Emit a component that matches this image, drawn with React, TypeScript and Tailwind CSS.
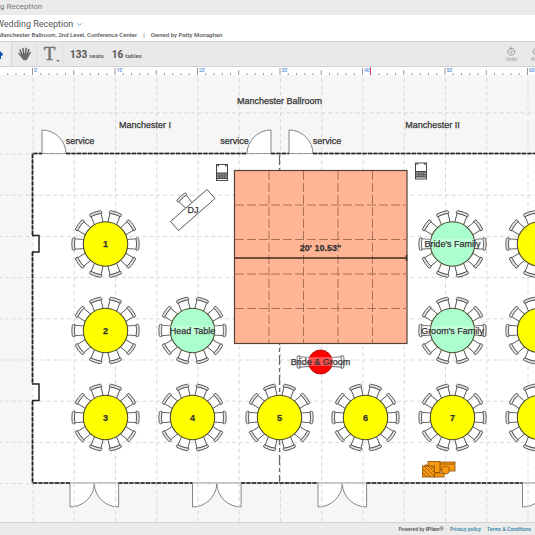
import React, { useEffect, useState } from "react";
import { ChevronDown } from "lucide-react";

const INK = "#555";
const STEP = 41.25;
const ORIGIN_X = 32.5;

type TableSpec = { x: number; y: number; label: string; fill: string };

const YELLOW = "#ffff00";
const MINT = "#aaffcc";

const tables: TableSpec[] = [
  { x: 105.5, y: 244, label: "1", fill: YELLOW },
  { x: 105.5, y: 330.5, label: "2", fill: YELLOW },
  { x: 105.5, y: 417.5, label: "3", fill: YELLOW },
  { x: 192.5, y: 330.5, label: "Head Table", fill: MINT },
  { x: 192.5, y: 417.5, label: "4", fill: YELLOW },
  { x: 279.5, y: 417.5, label: "5", fill: YELLOW },
  { x: 365.5, y: 417.5, label: "6", fill: YELLOW },
  { x: 452.5, y: 244, label: "Bride's Family", fill: MINT },
  { x: 452.5, y: 330.5, label: "Groom's Family", fill: MINT },
  { x: 452.5, y: 417.5, label: "7", fill: YELLOW },
  { x: 539.5, y: 244, label: "10", fill: YELLOW },
  { x: 539.5, y: 330.5, label: "9", fill: YELLOW },
  { x: 539.5, y: 417.5, label: "8", fill: YELLOW },
];

function Chair() {
  return (
    <g fill="#fff" stroke={INK} strokeWidth="0.9">
      <path d="M20 -4.4 L31 -5.2 V5.2 L20 4.4 Z" />
      <path d="M30.5 -6 Q32 -6.8 33.2 -5.6 Q34.2 0 33.2 5.6 Q32 6.8 30.5 6 Q31.6 0 30.5 -6 Z" fill="#e4e4e4" />
    </g>
  );
}

function Label({ x, y, text, bold }: { x: number; y: number; text: string; bold?: boolean }) {
  return (
    <text
      x={x}
      y={y}
      textAnchor="middle"
      stroke="#333"
      strokeWidth="0.25"
      className={bold ? "fill-[#333] text-[9px] font-bold" : "fill-[#333] text-[9px]"}
    >
      {text}
    </text>
  );
}

function RoundTable({ x, y, label, fill }: TableSpec) {
  const named = label.length > 2;
  return (
    <g>
      <g transform={`translate(${x} ${y})`}>
        {Array.from({ length: 10 }, (_, i) => (
          <g key={i} transform={`rotate(${i * 36})`}>
            <Chair />
          </g>
        ))}
        <circle r="22.2" fill={fill} stroke="#4c4c30" strokeWidth="1.1" />
        {named && <rect x="-31" y="-5" width="62" height="9" fill="#fff" opacity="0.25" />}
      </g>
      <Label x={x} y={y + 3} text={label} bold={!named} />
    </g>
  );
}

function ServiceDoor({ x, flip }: { x: number; flip?: boolean }) {
  return (
    <path
      d="M0 0 V-23.5 A24 24 0 0 1 24 0 Z"
      transform={`translate(${x} 153.5) scale(${flip ? -1 : 1} 1)`}
      fill="#fff"
      stroke="#858585"
    />
  );
}

function DoubleDoor({ x }: { x: number }) {
  return (
    <path
      d="M0 0 V24 A24.3 24 0 0 0 24.3 1 A24.3 24 0 0 0 48.6 24 V0 Z"
      transform={`translate(${x} 483)`}
      fill="#fff"
      stroke="#858585"
    />
  );
}

function Speaker({ x, y }: { x: number; y: number }) {
  return (
    <g transform={`translate(${x} ${y})`} stroke="#444">
      <rect width="11" height="16" fill="#fff" />
      <path d="M0 8.500 H11 V14 H0 Z" fill="#888" />
      <path d="M1 11.500 H10 M3 9 V14 M5.500 9 V14 M8 9 V14" strokeWidth="0.5" />
      <path d="M1 1 H2.500 M8.500 1 H10" strokeWidth="1.5" />
    </g>
  );
}

function GiftTable() {
  return (
    <g transform="translate(422 461)" fill="#f79a12" stroke="#8a4d05" strokeWidth="0.8">
      <rect x="18" y="1" width="15" height="9" />
      <path d="M19 3 H33" />
      <rect x="3" y="4" width="14" height="9" />
      <rect x="12" y="12" width="10" height="4" />
      <rect x="6" y="0.5" width="12" height="11" />
      <rect x="0.5" y="5" width="12" height="11" />
      <path d="M1 8 L8.500 16 M1 12 L5 16 M2 5 L12 15 M6 5 L12 11 M9 5 L12 8" />
      <circle cx="23.500" cy="9" r="4" />
    </g>
  );
}

function DanceFloor() {
  return (
    <g>
      <rect x="234.500" y="170.500" width="172.500" height="173" fill="#ffb593" stroke="#554138" strokeWidth="1.2" />
      <path
        d="M269 171 V343 M303.500 171 V343 M338 171 V343 M372.500 171 V343 M235 205 H407 M235 239.500 H407 M235 274 H407 M235 308.500 H407"
        stroke="#a97157"
        strokeDasharray="9 3"
        fill="none"
      />
      <path d="M234.500 258 H407 M406.500 255 V261" stroke="#3d2a20" strokeWidth="1.5" />
      <Label x={320.5} y={251} text={"20' 10.53\""} bold />
    </g>
  );
}

const WALLS =
  "M32.500 235 V153.500 H42 M66 153.500 H247 M271 153.500 H289 M313 153.500 H2000 M32.500 252 V384 M32.500 401 V483 H70 M118.500 483 H192.500 M241 483 H318 M366.500 483 H522.500";

function FloorPlan() {
  return (
    <svg
      role="img"
      aria-label="Manchester Ballroom floor plan"
      className="block min-h-[447px] w-full flex-1 bg-[#f6f6f6] font-['Liberation_Sans',Arial,sans-serif]"
    >
      <defs>
        <pattern id="grid" x="32.5" y="153.5" width={STEP} height="41.2" patternUnits="userSpaceOnUse">
          <path d={`M0.5 0 V41.2 M0 0.5 H${STEP}`} stroke="#d8d8d8" strokeDasharray="4 2.9" fill="none" />
        </pattern>
      </defs>
      <g transform="translate(0 -75)">
        <rect x="32.500" y="153.500" width="2000" height="329.500" fill="#fff" />
        <ServiceDoor x={42} />
        <ServiceDoor x={271} flip />
        <ServiceDoor x={289} />
        <DoubleDoor x={70} />
        <DoubleDoor x={192.5} />
        <DoubleDoor x={318} />
        <DoubleDoor x={522.5} />
        <rect y="75" width="2000" height="2000" fill="url(#grid)" />
        <g fill="none" strokeWidth="1.6">
          <path d={WALLS} stroke="#909090" />
          <path d={WALLS} stroke="#222" strokeDasharray="4 1.5" />
          <path d="M32 235.500 H39 V252 H32 M32 384 H39 V400.500 H32" stroke="#222" strokeWidth="1.5" />
        </g>
        <path d="M279.500 155 V482" stroke="#666" strokeWidth="1.2" strokeDasharray="10 3 4 3" />

        <Label x={279.5} y={104} text="Manchester Ballroom" />
        <Label x={145} y={128} text="Manchester I" />
        <Label x={432.5} y={128} text="Manchester II" />
        <Label x={80} y={144} text="service" />
        <Label x={234.5} y={144} text="service" />
        <Label x={327} y={144} text="service" />

        <Speaker x={216.5} y={164.5} />
        <Speaker x={415.5} y={163} />

        <g transform="translate(202 220) rotate(-132) scale(0.95)">
          <Chair />
        </g>
        <path d="M207 189.500 L215 198.500 L178.500 230.500 L170.500 221.500 Z" fill="#fff" stroke={INK} />
        <Label x={193} y={213} text="DJ" />

        <DanceFloor />
        {tables.map((t) => (
          <RoundTable key={t.label} {...t} />
        ))}

        <g transform="translate(320.5 362)">
          <g transform="translate(-10 0)"><Chair /></g>
          <g transform="translate(10 0) rotate(180)"><Chair /></g>
          <circle r="12" fill="#ff0000" stroke="#b31212" />
          <rect x="-24" y="-5" width="48" height="9" fill="#fff" opacity="0.3" />
        </g>
        <Label x={320.5} y={365} text="Bride & Groom" />
        <GiftTable />
      </g>
    </svg>
  );
}

function useWindowWidth() {
  const [width, setWidth] = useState(window.innerWidth);
  useEffect(() => {
    const update = () => setWidth(window.innerWidth);
    window.addEventListener("resize", update);
    return () => window.removeEventListener("resize", update);
  }, []);
  return width;
}

function Ruler() {
  const width = useWindowWidth();
  return (
    <svg aria-label="Ruler" className="block h-2 w-full shrink-0 bg-white font-[Roboto,sans-serif]">
      {Array.from({ length: Math.floor((width * 5) / STEP) }, (_, i) => {
        const n = i - 3;
        const x = ORIGIN_X + (n * STEP) / 5;
        const labelled = n % 10 === 0;
        const height = labelled ? 7 : n % 5 === 0 ? 5 : 2;
        return (
          <g key={n}>
            <path d={`M${x} ${8 - height} V8`} stroke="#999" />
            {labelled && (
              <text x={x + 1.5} y="5" className="fill-[#2f76cf] text-[5px]">
                {n}'
              </text>
            )}
          </g>
        );
      })}
      <path d="M370.500 0 V8" stroke="#dc3c64" />
    </svg>
  );
}

function HistoryIcon({ redo }: { redo?: boolean }) {
  return (
    <svg
      viewBox="0 0 12 12"
      className={redo ? "size-[10px] -scale-x-100" : "size-[10px]"}
      fill="none"
      stroke="currentColor"
      strokeWidth="1.2"
    >
      <path d="M2.800 4.500 A4.200 4.200 0 1 0 8 3 H4 M6.500 0.500 L4 3 L6.500 5.500 M4 6.500 L6 8.500 L8.500 6" />
    </svg>
  );
}

export default function App() {
  return (
    <div className="flex min-h-screen flex-col overflow-hidden bg-[#ebebeb] font-[Roboto,sans-serif] text-[#555]">
      <div className="h-[15px] shrink-0 overflow-hidden whitespace-nowrap text-[8px] leading-[13px] text-[#777]">g Reception</div>

      <header className="h-[26px] shrink-0 whitespace-nowrap bg-white">
        <h1 className="-ml-1 flex h-[15px] items-center gap-[3px] pt-[3px] text-[9px] leading-[12px]">
          Wedding Reception
          <button type="button" aria-label="Event options" className="text-[#54a3ab]">
            <ChevronDown size={7} strokeWidth={3} />
          </button>
        </h1>
        <p className="-ml-0.5 flex gap-1.5 text-[6px] leading-[9px] font-medium">
          <span>Manchester Ballroom, 2nd Level, Conference Center</span>
          <span>|</span>
          <span>Owned by Patty Monaghan</span>
        </p>
      </header>

      <div role="toolbar" className="flex h-[26px] shrink-0 items-stretch border-y border-[#d3d3d3] bg-[#e9e9e9]">
        <button type="button" aria-label="Select" className="flex w-3 items-center overflow-hidden border-r border-[#d8d8d8] bg-[#efefef] text-[#1552b5]">
          <svg viewBox="0 0 3 12" className="h-3 w-[3px]" fill="currentColor">
            <path d="M0 3 L3 6 L2 8 H1 V11 H0 Z" />
          </svg>
        </button>
        <button type="button" aria-label="Pan" className="flex w-[25px] items-center justify-center border-r border-[#dcdcdc] text-[#6a6a6a]">
          <svg viewBox="0 0 26 28" className="h-[14px] w-[13px]" fill="none" stroke="currentColor" strokeLinecap="round" strokeLinejoin="round">
            <path d="M8 15 L4 6 M11.500 14 L10 3 M15.500 14 L16 2.500 M19 15 L21.500 5" strokeWidth="3.200" />
            <path d="M2 13 L8 20 M20 19 L24.500 11" strokeWidth="3" />
            <path d="M8 14 H20 V20 L17 25.500 H11 L7 19 Z" fill="currentColor" strokeWidth="2" />
          </svg>
        </button>
        <button type="button" aria-label="Add text" className="relative flex w-[26px] items-center justify-center border-r border-[#dcdcdc] font-['Liberation_Serif',serif] text-[19px] text-[#737373]">
          <span className="[-webkit-text-stroke:0.5px_#737373]">T</span>
          <span className="absolute right-0.5 bottom-1 border-x-2 border-t-2 border-x-transparent border-t-[#777]" />
        </button>
        <div className="flex items-center gap-2 pl-[7px] text-[6px] font-medium">
          <span className="flex items-baseline gap-[2px]"><b className="text-[10px] text-[#555]">133</b>seats</span>
          <span className="flex items-baseline gap-[2px]"><b className="text-[10px] text-[#555]">16</b>tables</span>
        </div>
        <div className="-mr-3 ml-auto flex gap-2.5 pr-0.5 text-[5px] leading-[7px] text-[#999]">
          <button type="button" className="flex w-4 flex-col items-center justify-center">
            <HistoryIcon />
            Undo
          </button>
          <button type="button" className="flex w-4 flex-col items-center justify-center">
            <HistoryIcon redo />
            Redo
          </button>
        </div>
      </div>

      <Ruler />
      <FloorPlan />

      <footer className="flex h-[13px] shrink-0 items-baseline justify-end gap-[6px] border-t border-[#d3d3d3] bg-[#ebebeb] pr-1 text-[5px] leading-[11px] font-medium">
        <span>Powered by <b className="text-[6px]">iPlan®</b></span>
        <a href="#privacy" className="text-[#2d80a8]">Privacy policy</a>
        <a href="#terms" className="text-[#2d80a8]">Terms &amp; Conditions</a>
      </footer>
    </div>
  );
}
